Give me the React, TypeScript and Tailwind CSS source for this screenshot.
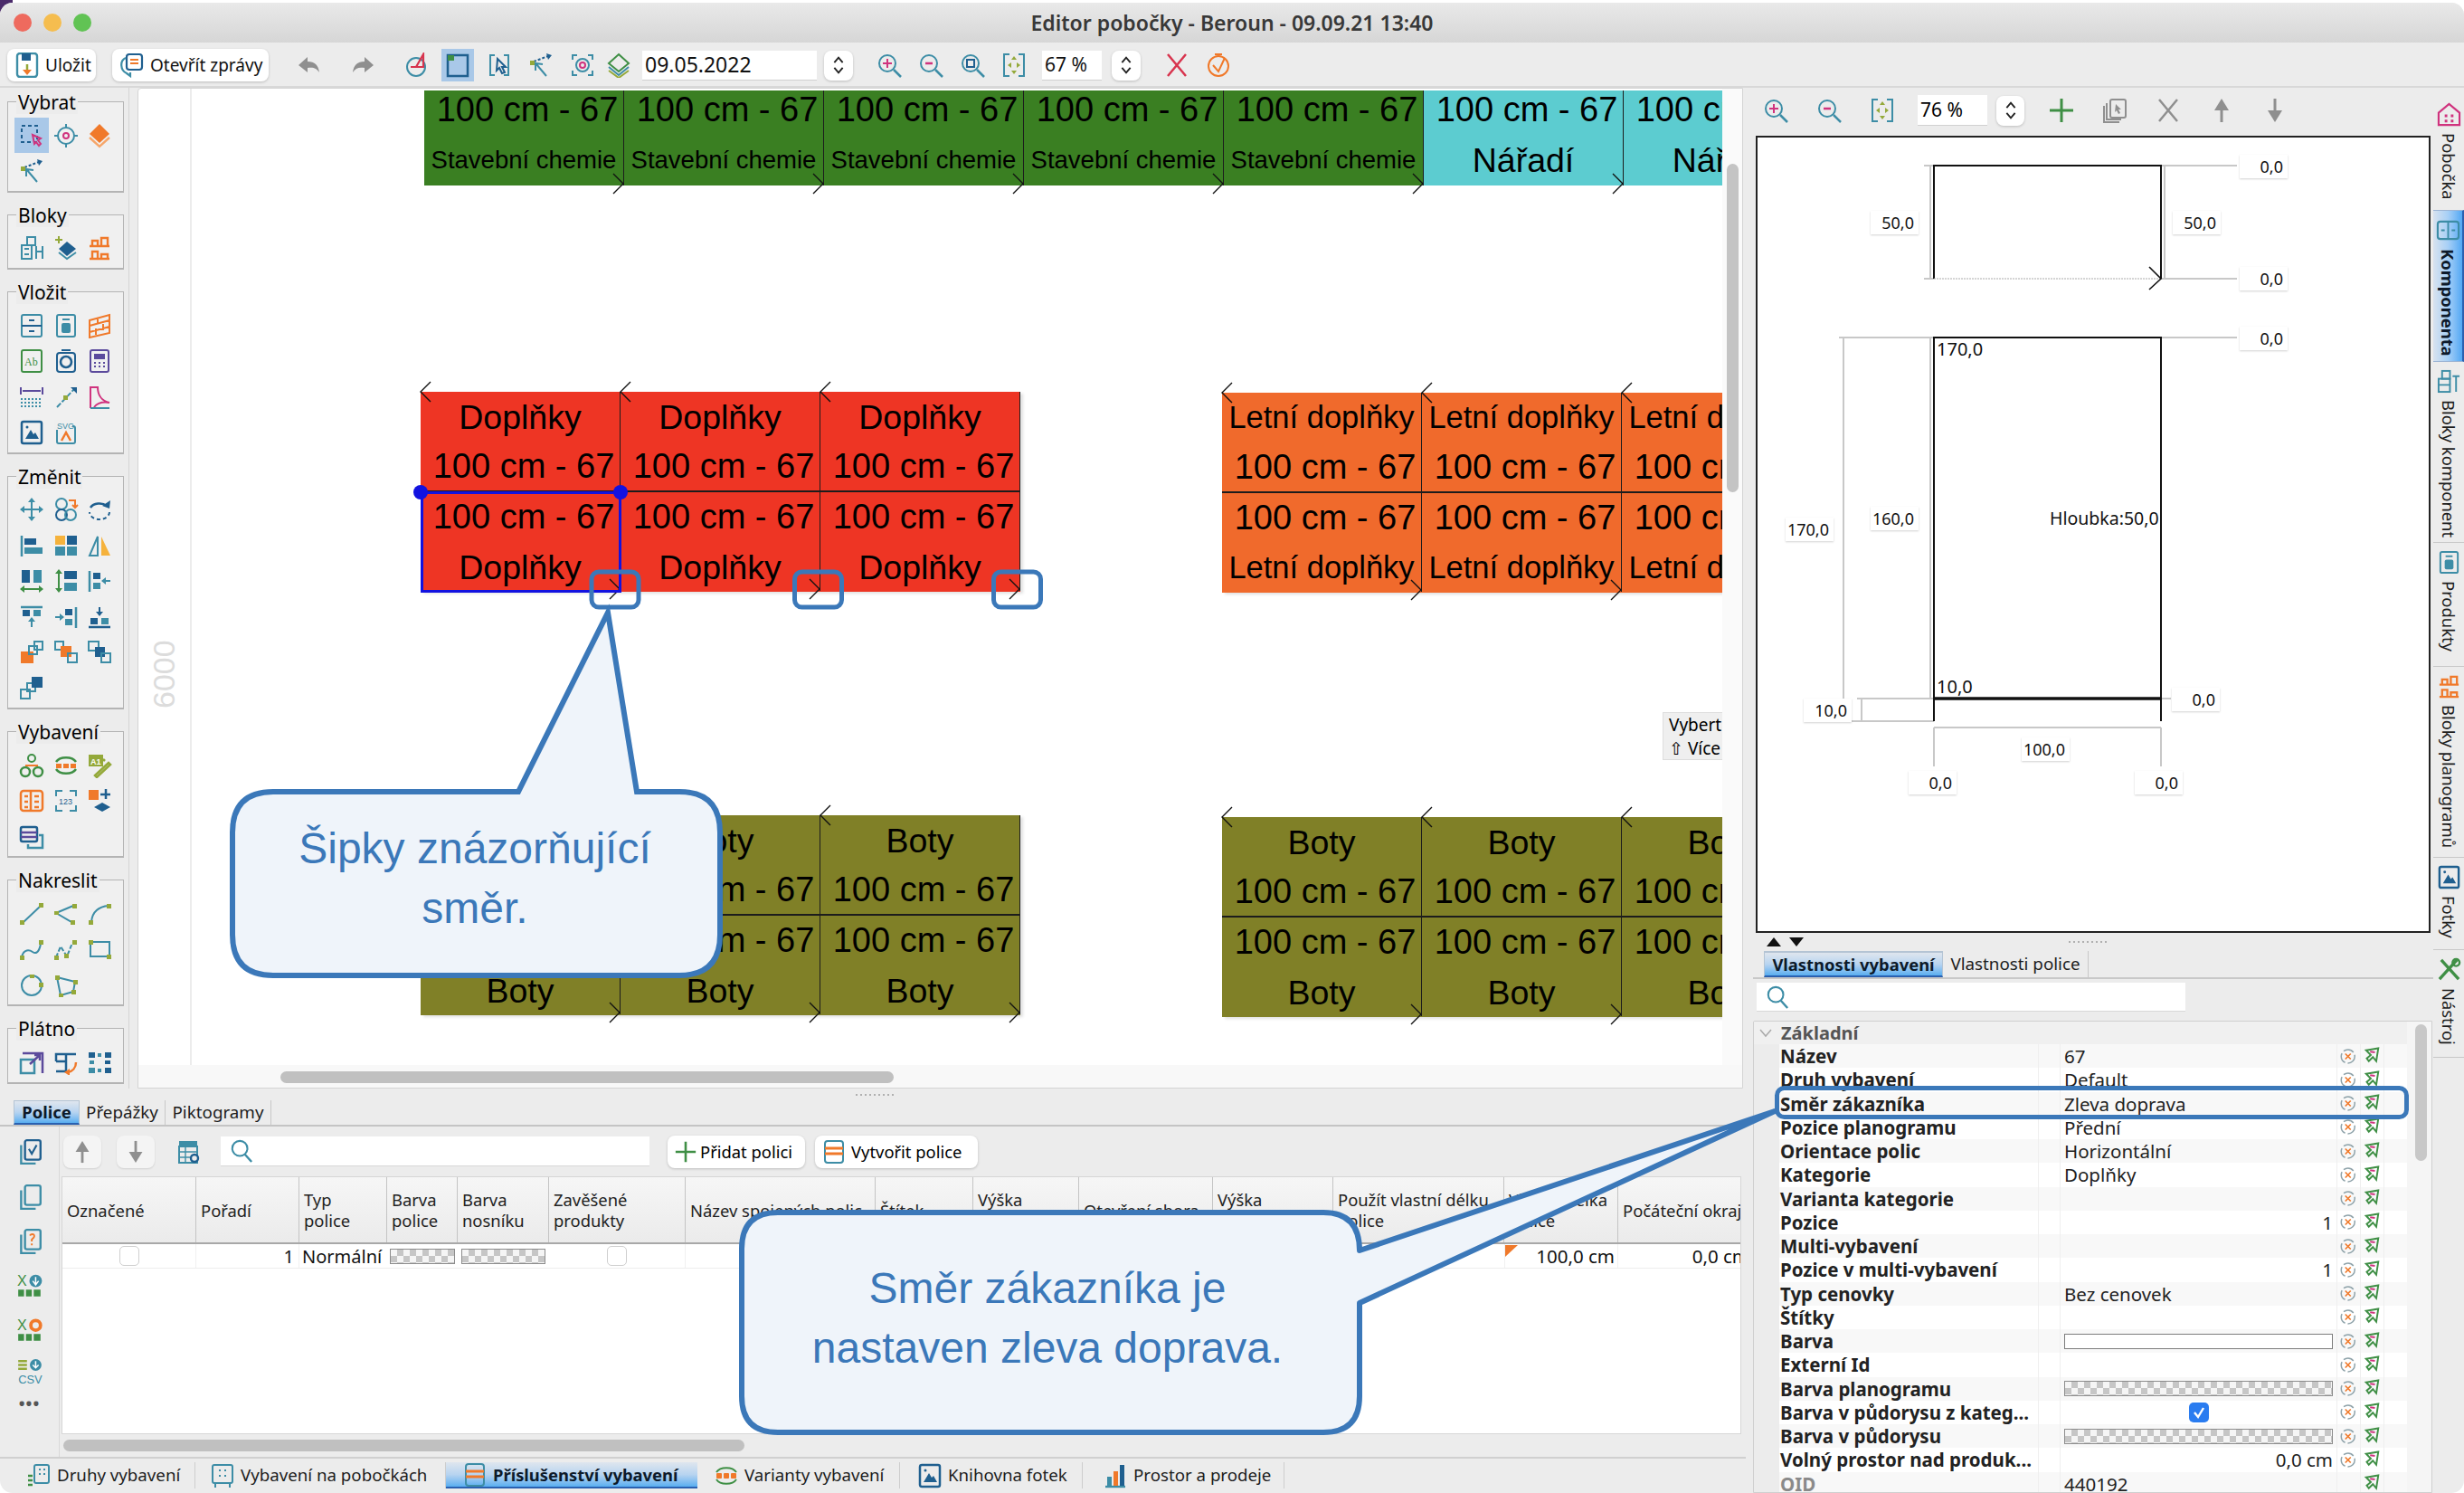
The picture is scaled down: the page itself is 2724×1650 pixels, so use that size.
import React from "react";

const T = "#3d8da6", N = "#1f5f8f", O = "#f0792a", G = "#3f8f45", L = "#94a93a", P = "#d0337e", V = "#5b4a9c", GR = "#8f8f8f", R = "#d8344e";

function Ic({ s = 28, children }: { s?: number; children: React.ReactNode }) {
  return (
    <svg width={s} height={s} viewBox="0 0 28 28" fill="none" strokeWidth="2" className="shrink-0">
      {children}
    </svg>
  );
}

const icons: Record<string, React.ReactNode> = {
  select: <><rect x="3" y="3" width="17" height="18" stroke={N} strokeDasharray="4 3" /><path d="M15 13l9 4-3 2 3 4-2 2-3-4-2 2z" stroke={P} /></>,
  target: <><circle cx="14" cy="14" r="9" stroke={T} /><path d="M14 1v5M14 22v5M1 14h5M22 14h5" stroke={T} /><circle cx="14" cy="14" r="3" stroke={P} /></>,
  layers: <><path d="M14 1l11 11-11 10L3 12z" fill={O} /><path d="M3 16l11 10 11-10" stroke="#f6a66a" strokeWidth="2.4" /></>,
  connect: <><path d="M6 10L22 4" stroke={N} strokeDasharray="3 2" /><path d="M20 1l6 2-4 5z" fill={N} /><rect x="2" y="9" width="5" height="5" fill={L} /><path d="M20 26L9 13M8 20l0-8 8 1" stroke={T} /></>,
  blocks: <><rect x="3" y="11" width="11" height="15" stroke={T} /><rect x="9" y="2" width="9" height="9" stroke={T} /><path d="M19 12v14M19 18h7M26 12v14M6 15h5M6 21h5" stroke={T} /></>,
  addlayer: <><path d="M15 7l10 8-10 8-9-8z" fill={N} /><path d="M6 19l9 7 10-7" stroke={T} /><path d="M6 1v8M2 5h8" stroke={L} /></>,
  oshelf: <><path d="M3 12h22M3 26h22M6 12V6h6v6M16 12V3h7v9M6 26v-8h6v8M16 26v-5h7v5" stroke={O} strokeWidth="2.4" /></>,
  drawer: <><rect x="3" y="2" width="22" height="24" rx="2" stroke={T} /><path d="M3 14h22M11 8h6M11 20h6" stroke={N} /></>,
  box: <><rect x="4" y="2" width="20" height="24" rx="2" stroke={T} /><rect x="9" y="11" width="10" height="11" rx="2" fill={T} /><path d="M10 7h8" stroke={T} /></>,
  bricks: <><path d="M3 8l22-6v6L3 14zM3 14l22-6v7L3 21zM3 21l22-6v7L3 27zM12 5v7M18 12v7M10 17v7" stroke={O} /></>,
  ab: <><rect x="3" y="2" width="22" height="24" rx="2" stroke={G} /><text x="6" y="19" fontSize="12" fill="#3f8f45" fontFamily="Liberation Serif, serif">Ab</text></>,
  camera: <><rect x="4" y="5" width="20" height="21" rx="3" stroke={N} /><circle cx="14" cy="15" r="6" stroke={N} strokeWidth="2.6" /><path d="M9 2h10" stroke={N} /></>,
  calc: <><rect x="4" y="2" width="20" height="24" rx="2" stroke={V} /><rect x="8" y="6" width="12" height="6" fill={V} /><path d="M8 16h2M13 16h2M18 16h2M8 20h2M13 20h2M18 20h2" stroke={V} /></>,
  dim: <><path d="M2 3v8M26 3v8M4 7h20" stroke={V} /><path d="M2 16h24M2 20h24M2 24h24" stroke={T} strokeDasharray="2 2" /></>,
  line: <><path d="M4 25L24 4" stroke={T} strokeDasharray="6 2" /><rect x="11" y="12" width="5" height="5" fill={L} /><path d="M19 3h7v7z" fill={N} /></>,
  pdf: <><path d="M4 26V3h8c0 8 4 15 13 17-6-1-13 0-17 5" stroke={P} /><path d="M4 26h21" stroke={T} /></>,
  image: <><rect x="3" y="2" width="22" height="24" rx="2" stroke={N} strokeWidth="2.5" /><path d="M7 21l6-10 3 5 2-2 4 7z" fill={N} /><circle cx="9" cy="8" r="1.5" fill={N} /></>,
  svg: <><rect x="4" y="7" width="20" height="19" rx="2" stroke={T} /><rect x="1" y="0" width="20" height="11" fill="#efefef" /><text x="4" y="9.5" fontSize="9" fill="#3d8da6" fontFamily="Liberation Sans, sans-serif">SVG</text><path d="M9 23l5-9 5 9" stroke={O} strokeWidth="2.5" /></>,
  move: <><path d="M14 2v24M2 14h24" stroke={T} /><path d="M14 1l-4 5h8zM14 27l-4-5h8zM1 14l5-4v8zM27 14l-5-4v8z" fill={T} /></>,
  merge: <><circle cx="9" cy="8" r="6" stroke={T} /><circle cx="9" cy="20" r="6" stroke={N} /><circle cx="19" cy="20" r="6" stroke={T} /><path d="M17 4h7v7M21 9l3 3 3-3" stroke={O} /></>,
  rotate: <><path d="M4 12a11 8 0 0 1 18-2" stroke={N} strokeWidth="2.5" /><path d="M26 4l-1 9-8-3z" fill={N} /><path d="M25 17a11 8 0 0 1-22 0" stroke={N} strokeDasharray="4 3" /></>,
  alignL: <><path d="M3 3v23" stroke={T} strokeWidth="2.5" /><rect x="6" y="6" width="13" height="7" fill={N} /><rect x="6" y="16" width="20" height="7" fill={T} /></>,
  tile: <><rect x="2" y="3" width="11" height="10" fill="#f5b23c" /><rect x="15" y="3" width="11" height="10" fill={N} /><rect x="2" y="15" width="11" height="10" fill={T} /><rect x="15" y="15" width="11" height="10" fill={T} /></>,
  mirror: <><path d="M12 4L3 25h9z" stroke={T} /><path d="M16 4l10 21H16z" fill="#f5b23c" /></>,
  distH: <><rect x="3" y="2" width="9" height="14" fill={N} /><rect x="16" y="2" width="9" height="14" fill={T} /><path d="M2 23h24" stroke={G} /><path d="M1 23l5-4v8zM27 23l-5-4v8z" fill={G} /></>,
  distV: <><path d="M6 3v22" stroke={G} /><path d="M6 1l-4 5h8zM6 27l-4-5h8z" fill={G} /><rect x="12" y="3" width="14" height="9" fill={N} /><rect x="12" y="16" width="14" height="9" fill={T} /></>,
  alignLA: <><path d="M3 3v23" stroke={T} strokeWidth="2.5" /><rect x="7" y="5" width="8" height="7" fill={N} /><rect x="7" y="16" width="8" height="7" fill={T} /><path d="M17 14h9" stroke={T} /><path d="M16 14l5-4v8z" fill={T} /></>,
  alignT: <><path d="M2 3h24" stroke={T} strokeWidth="2.5" /><rect x="4" y="6" width="8" height="7" fill={N} /><rect x="16" y="6" width="8" height="7" fill={T} /><path d="M14 15v10" stroke={T} /><path d="M14 14l-4 5h8z" fill={T} /></>,
  alignR: <><path d="M25 3v23" stroke={T} strokeWidth="2.5" /><rect x="13" y="5" width="8" height="7" fill={N} /><rect x="13" y="16" width="8" height="7" fill={T} /><path d="M2 14h9" stroke={T} /><path d="M12 14l-5-4v8z" fill={T} /></>,
  alignB: <><path d="M2 25h24" stroke={N} strokeWidth="2.5" /><rect x="4" y="15" width="8" height="7" fill={N} /><rect x="16" y="15" width="8" height="7" fill={T} /><path d="M14 3v9" stroke={N} /><path d="M14 13l-4-5h8z" fill={N} /></>,
  front: <><rect x="2" y="13" width="14" height="13" fill={O} /><rect x="11" y="7" width="9" height="9" stroke={T} /><rect x="17" y="2" width="9" height="9" stroke={T} /></>,
  forward: <><rect x="2" y="2" width="9" height="9" stroke={T} /><rect x="8" y="7" width="12" height="12" fill={O} /><rect x="16" y="15" width="10" height="10" stroke={T} /></>,
  backward: <><rect x="2" y="2" width="11" height="10" stroke={T} /><rect x="9" y="8" width="11" height="11" fill={N} /><rect x="16" y="15" width="10" height="10" stroke={T} /></>,
  back: <><rect x="2" y="16" width="10" height="10" stroke={T} /><rect x="9" y="9" width="9" height="9" stroke={T} /><rect x="14" y="2" width="12" height="12" fill={N} /></>,
  tree: <><circle cx="14" cy="6" r="4" stroke={G} /><circle cx="7" cy="21" r="5" stroke={G} strokeWidth="2.5" /><circle cx="21" cy="21" r="5" stroke={G} strokeWidth="2.5" /><path d="M7 14h14" stroke={O} /></>,
  arc: <><path d="M3 10a12 8 0 0 1 22 0M3 18a12 8 0 0 0 22 0" stroke={G} strokeWidth="2.5" /><rect x="3" y="12" width="6" height="5" fill={O} /><rect x="11" y="12" width="6" height="5" fill={O} /><rect x="19" y="12" width="6" height="5" fill={O} /></>,
  a1: <><rect x="2" y="2" width="16" height="13" fill={L} /><text x="4" y="12.5" fontSize="9" fontWeight="700" fill="#ffffff" fontFamily="Liberation Sans, sans-serif">A1</text><path d="M9 25l15-14 2 2-15 14zM18 7l2 2" stroke={L} strokeWidth="2.5" /></>,
  oshelf2: <><rect x="2" y="3" width="24" height="22" rx="3" stroke={O} strokeWidth="2.5" /><path d="M13 3v22M6 9h4M6 15h4M6 21h4M17 9h5M17 15h5M17 21h5" stroke={O} strokeWidth="2.5" /></>,
  n123: <><path d="M3 9V3h7M18 3h7v6M3 19v6h7M18 25h7v-6" stroke={T} /><text x="6" y="18" fontSize="9" fill="#1f5f8f" fontFamily="Liberation Sans, sans-serif">123</text></>,
  oplus: <><rect x="2" y="2" width="11" height="11" fill={O} /><path d="M21 1v11M15 7h11" stroke={N} strokeWidth="2.5" /><path d="M8 21l9-5 9 5-9 5z" fill={N} /></>,
  list: <><rect x="2" y="3" width="18" height="16" rx="2" stroke={N} strokeWidth="2.5" /><path d="M2 9h18M2 14h18" stroke={V} strokeWidth="2.5" /><path d="M22 12h4v14H10v-4" stroke={T} strokeWidth="2.5" /></>,
  dline: <><path d="M5 23L23 6" stroke={T} /><rect x="1" y="21" width="5" height="5" fill={L} /><rect x="22" y="2" width="5" height="5" fill={L} /></>,
  dpoly: <><path d="M3 13L22 5M3 13l17 10" stroke={T} /><rect x="1" y="11" width="5" height="4" fill={L} /><rect x="21" y="3" width="5" height="5" fill={L} /><rect x="19" y="21" width="5" height="5" fill={L} /></>,
  darc: <><path d="M5 23C6 12 12 6 24 5" stroke={T} /><rect x="2" y="21" width="5" height="5" fill={L} /><rect x="22" y="3" width="5" height="5" fill={L} /></>,
  dcurve: <><path d="M3 23c2-10 9-8 12-6s7 2 9-9" stroke={T} /><rect x="1" y="21" width="5" height="5" fill={L} /><rect x="22" y="4" width="5" height="5" fill={L} /></>,
  dcurve2: <><path d="M3 23l5-12 7 11 6-15" stroke={T} strokeDasharray="5 2" /><rect x="1" y="21" width="5" height="5" fill={L} /><rect x="12" y="19" width="5" height="5" fill={L} /><rect x="21" y="4" width="5" height="5" fill={L} /></>,
  drect: <><rect x="4" y="6" width="21" height="16" stroke={T} /><rect x="2" y="4" width="5" height="5" fill={L} /><rect x="22" y="20" width="5" height="5" fill={L} /></>,
  dcirc: <><circle cx="14" cy="14" r="11" stroke={T} /><rect x="22" y="11" width="5" height="5" fill={L} /><rect x="12" y="2" width="5" height="4" fill={L} /></>,
  dpolyg: <><path d="M4 5l20 5-2 11-14 4z" stroke={T} /><rect x="2" y="3" width="5" height="5" fill={L} /><rect x="22" y="8" width="5" height="5" fill={L} /><rect x="20" y="19" width="5" height="5" fill={L} /><rect x="6" y="23" width="5" height="4" fill={L} /></>,
  resize: <><rect x="2" y="11" width="15" height="15" stroke={T} strokeWidth="2.5" /><path d="M4 4h22v22M12 16L23 6M17 6h6v6" stroke={V} strokeWidth="2.5" /></>,
  rot90: <><path d="M3 13V5h22M14 5v8M3 13h11v11H3" stroke={N} strokeWidth="2.5" /><path d="M25 14c0 6-4 10-9 11" stroke={O} strokeWidth="2.5" /><path d="M12 25l6-4v8z" fill={O} /></>,
  dots: <><rect x="2" y="3" width="7" height="6" fill={N} /><rect x="12" y="4" width="4" height="4" fill={T} /><rect x="20" y="3" width="7" height="6" fill={N} /><rect x="3" y="12" width="5" height="4" fill={T} /><rect x="20" y="12" width="6" height="4" fill={N} /><rect x="2" y="20" width="7" height="6" fill={T} /><rect x="12" y="21" width="4" height="4" fill={T} /><rect x="20" y="20" width="7" height="6" fill={N} /></>,
  save: <><rect x="3" y="1" width="22" height="26" rx="3" stroke={T} strokeWidth="2.4" /><rect x="8" y="1" width="10" height="8" fill={N} /><path d="M14 13v8" stroke={L} strokeWidth="2.5" /><path d="M14 25l-5-6h10z" fill={O} /></>,
  msg: <><rect x="8" y="2" width="17" height="17" rx="3" stroke={N} strokeWidth="2.2" /><path d="M12 8h9M12 12h9" stroke={O} strokeWidth="2.2" /><path d="M7 6c-7 3-6 14 1 17l4 3v-4" stroke={T} strokeWidth="2.2" /></>,
  undo: <path d="M12 5L2 14l10 8v-5c6-1 10 0 13 5-1-8-5-12-13-12z" fill={GR} />,
  redo: <path d="M16 5l10 9-10 8v-5c-6-1-10 0-13 5 1-8 5-12 13-12z" fill={GR} />,
  clock: <><circle cx="14" cy="16" r="10" stroke={T} /><path d="M14 16l8-14 0 14H8" stroke={R} strokeWidth="2.2" /></>,
  sel: <><rect x="3" y="3" width="22" height="23" stroke={N} strokeWidth="2.5" /><rect x="3" y="3" width="7" height="6" fill={G} /></>,
  selarrow: <><path d="M9 3H4v22h5M19 3h5v22h-5" stroke={T} /><path d="M12 7l9 9-4 0 3 6-3 1-3-6-3 3z" stroke={N} /></>,
  cam: <><path d="M8 3H3v5M20 3h5v5M8 25H3v-5M20 25h5v-5" stroke={T} /><circle cx="14" cy="14" r="7" stroke={T} /><circle cx="14" cy="14" r="3" stroke={P} /></>,
  stack: <><path d="M14 2l11 10-11 9L3 12z" stroke={G} /><path d="M3 16l11 9 11-9" stroke={T} /><path d="M3 20l11 8 11-8" stroke={L} /></>,
  zin: <><circle cx="12" cy="12" r="9" stroke={T} /><path d="M19 19l8 8" stroke={T} strokeWidth="2.5" /><path d="M12 7v10M7 12h10" stroke={P} /></>,
  zout: <><circle cx="12" cy="12" r="9" stroke={T} /><path d="M19 19l8 8" stroke={T} strokeWidth="2.5" /><path d="M8 12h8" stroke={P} strokeWidth="2.5" /></>,
  zfit: <><circle cx="12" cy="12" r="9" stroke={T} /><path d="M19 19l8 8" stroke={T} strokeWidth="2.5" /><rect x="8" y="8" width="8" height="8" stroke={N} /></>,
  zall: <><path d="M9 2H3v24h6M19 2h6v24h-6" stroke={T} /><path d="M14 4l3 4h-6zM14 24l3-4h-6zM7 14l4-3v6zM21 14l-4-3v6z" fill={L} /></>,
  x: <path d="M4 2l20 24M24 2L4 26" stroke={R} strokeWidth="2.5" />,
  check: <><circle cx="14" cy="15" r="11" stroke={O} /><path d="M8 14l6 7 7-15M10 2h8" stroke={O} /></>,
  xg: <path d="M4 2l20 24M24 2L4 26" stroke={GR} strokeWidth="2.5" />,
  plus: <path d="M14 1v26M1 14h26" stroke="#3f8f45" strokeWidth="3" />,
  copy: <><rect x="9" y="2" width="17" height="20" rx="2" stroke={GR} /><path d="M5 6v18h16M2 9v18h17" stroke={GR} /><path d="M15 7l6 6h-3l2 4-2 1-2-4-2 2z" fill={GR} /></>,
  up: <><path d="M14 1l-8 13h16z" fill={GR} /><path d="M14 12v15" stroke={GR} strokeWidth="3" /></>,
  down: <><path d="M14 27l-8-13h16z" fill={GR} /><path d="M14 16V1" stroke={GR} strokeWidth="3" /></>,
  search: <><circle cx="12" cy="11" r="9" stroke={T} strokeWidth="2.2" /><path d="M18 18l8 9" stroke={T} strokeWidth="2.6" /></>,
  tcheck: <><rect x="9" y="2" width="16" height="20" rx="2" stroke={N} strokeWidth="2.2" /><path d="M5 7v19h15" stroke={T} strokeWidth="2.2" /><path d="M13 11l3 5 5-9" stroke={N} strokeWidth="2" /></>,
  tcopy: <><rect x="9" y="2" width="16" height="20" rx="2" stroke={T} strokeWidth="2.2" /><path d="M5 7v19h15" stroke={T} strokeWidth="2.2" /></>,
  thelp: <><rect x="9" y="2" width="16" height="20" rx="2" stroke={T} strokeWidth="2.2" /><path d="M5 7v19h15" stroke={T} strokeWidth="2.2" /><path d="M14 8c2-3 6-1 4 2l-2 2v2M16 16v2" stroke={O} strokeWidth="1.8" /></>,
  xlsd: <><text x="1" y="14" fontSize="15" fill="#3f8f45" fontFamily="Liberation Sans, sans-serif">X</text><circle cx="20" cy="9" r="6.5" fill={T} /><path d="M20 5v7M17 9l3 4 3-4" stroke="#fff" strokeWidth="1.4" /><path d="M2 18h6v7H2zM10 18h6v7h-6zM18 18h7v7h-7z" fill={G} /></>,
  xlso: <><text x="1" y="14" fontSize="15" fill="#3f8f45" fontFamily="Liberation Sans, sans-serif">X</text><circle cx="20" cy="9" r="5" stroke={O} strokeWidth="3.5" /><path d="M2 18h6v7H2zM10 18h6v7h-6zM18 18h7v7h-7z" fill={G} /></>,
  csv: <><path d="M2 3h9M2 7h9M2 11h9" stroke={L} strokeWidth="2.2" /><circle cx="20" cy="7" r="6" fill={T} /><path d="M20 3v6M17 7l3 3 3-3" stroke="#fff" strokeWidth="1.4" /><text x="2" y="26" fontSize="12" fill="#3d8da6" fontFamily="Liberation Sans, sans-serif">CSV</text></>,
  tset: <><rect x="3" y="2" width="20" height="6" fill={T} /><rect x="3" y="8" width="20" height="18" stroke={T} /><path d="M3 14h20M3 20h12M10 8v18" stroke={T} strokeWidth="1.4" /><circle cx="20" cy="21" r="4" stroke={N} strokeWidth="2.4" fill="#ececec" /></>,
  shelfo: <><rect x="4" y="2" width="20" height="24" rx="3" stroke={T} /><path d="M4 10h20M4 16h20" stroke={O} strokeWidth="3" /></>,
  kind: <><rect x="9" y="2" width="16" height="20" rx="2" stroke={T} /><path d="M14 7h2M19 7h2M14 12h2M19 12h2" stroke={T} /><path d="M2 14h5M2 19h5M2 24h5" stroke={G} strokeWidth="2.4" /></>,
  onb: <><rect x="3" y="2" width="22" height="20" rx="2" stroke={T} /><path d="M6 22v5M22 22v5M10 8h2M16 8h2M10 14h2M16 14h2" stroke={T} /></>,
  vari: <><path d="M3 10a12 8 0 0 1 22 0M3 18a12 8 0 0 0 22 0" stroke={G} /><rect x="3" y="11" width="6" height="6" rx="1" fill={O} /><rect x="11" y="11" width="6" height="6" rx="1" fill={O} /><rect x="19" y="11" width="6" height="6" rx="1" fill={O} /></>,
  chart: <><path d="M3 26h22" stroke={T} strokeWidth="2.4" /><rect x="5" y="15" width="5" height="10" fill={T} /><rect x="12" y="9" width="5" height="16" fill={O} /><rect x="19" y="2" width="5" height="23" fill={N} /></>,
  house: <><path d="M2 12L14 2l12 10v14H2z" stroke={P} strokeWidth="2.2" /><path d="M9 14h3v3H9zM16 14h3v3h-3zM9 20h3v3H9zM16 20h3v3h-3z" fill={P} /></>,
  comp: <><rect x="2" y="4" width="24" height="20" rx="3" stroke={T} strokeWidth="2.2" /><path d="M14 4v20M6 14h4M18 14h4" stroke={T} /></>,
  ble: <><rect x="2" y="11" width="13" height="15" stroke={T} /><rect x="6" y="2" width="9" height="9" stroke={T} /><path d="M18 8h8M22 8v18M2 18h13" stroke={T} /></>,
  wrench: <><path d="M5 3l20 22M23 3L3 25" stroke={G} strokeWidth="3.5" /><circle cx="22" cy="6" r="4" stroke={G} strokeWidth="2.5" /></>,
  reset: <><circle cx="13" cy="14" r="10" stroke="#8fa3aa" strokeWidth="2" strokeDasharray="16 4" /><path d="M9 10l8 8M17 10l-8 8" stroke={O} strokeWidth="2.2" /></>,
  pick: <><path d="M5 5l18-3-3 19-5-6-6 6-3-4 6-5z" stroke={G} strokeWidth="2.6" /><path d="M11 7l7 1" stroke={P} strokeWidth="2.4" /></>,
  spin: <path d="M9 11l5-6 5 6M9 17l5 6 5-6" stroke="#222" strokeWidth="2" />,
};

function Icon({ n, s }: { n: string; s?: number }) {
  return <Ic s={s}>{icons[n]}</Ic>;
}

function ToolSection({ title, items }: { title: string; items: string[] }) {
  return (
    <div className="relative w-[129px] border border-b-2 border-[#b4b4b4] bg-[#f0f0f0] px-[7px] pt-[17px] pb-[2px]">
      <span className="absolute -top-[13px] left-[9px] bg-[#ececec] px-[2px] text-[21px] leading-[26px] text-black">{title}</span>
      <div className="grid grid-cols-3">
        {items.map((n, i) => (
          <div key={i} className={`flex h-[39.4px] w-[38px] items-center justify-center ${n === "select" ? "bg-[#a9c8e8]" : ""}`}>
            <Icon n={n} />
          </div>
        ))}
      </div>
    </div>
  );
}

function Toolbox() {
  return (
    <div className="flex w-[143px] shrink-0 flex-col gap-[24px] border-r border-[#d4d4d4] pt-[15px] pl-[8px]">
      <ToolSection title="Vybrat" items={["select", "target", "layers", "connect"]} />
      <ToolSection title="Bloky" items={["blocks", "addlayer", "oshelf"]} />
      <ToolSection title="Vložit" items={["drawer", "box", "bricks", "ab", "camera", "calc", "dim", "line", "pdf", "image", "svg"]} />
      <ToolSection title="Změnit" items={["move", "merge", "rotate", "alignL", "tile", "mirror", "distH", "distV", "alignLA", "alignT", "alignR", "alignB", "front", "forward", "backward", "back"]} />
      <ToolSection title="Vybavení" items={["tree", "arc", "a1", "oshelf2", "n123", "oplus", "list"]} />
      <ToolSection title="Nakreslit" items={["dline", "dpoly", "darc", "dcurve", "dcurve2", "drect", "dcirc", "dpolyg"]} />
      <ToolSection title="Plátno" items={["resize", "rot90", "dots"]} />
    </div>
  );
}

function ChevL() {
  return (
    <svg width="14" height="26" viewBox="0 0 14 26" className="absolute -left-[1px] -top-[12px] z-10" fill="none">
      <path d="M12 1L1 12l11 11" stroke="#111" strokeWidth="1.4" />
    </svg>
  );
}
function ChevR() {
  return (
    <svg width="14" height="26" viewBox="0 0 14 26" className="absolute -bottom-[12px] -right-[1px] z-10" fill="none">
      <path d="M2 1l11 11L2 23" stroke="#111" strokeWidth="1.4" />
    </svg>
  );
}

const cellFont = "font-['Liberation_Sans',Arial,sans-serif] text-black";
const dimText = "100 cm - 67";

function textSize(l: string) {
  if (l === dimText) return "text-[38px] pl-[8px]";
  return l.length > 8 ? "text-[34.5px]" : "text-[37.5px]";
}

function Cell({ lines, rowCls, lineCls, top, bottom }: { lines: [string, string]; rowCls: string; lineCls: string; top?: boolean; bottom?: boolean }) {
  return (
    <div className={`relative w-[221px] shrink-0 border-r border-[#1c1c1c] ${rowCls}`}>
      {top && <ChevL />}
      {bottom && <ChevR />}
      <div className={`flex flex-col items-center whitespace-nowrap ${cellFont}`}>
        {lines.map((l, i) => (
          <div key={i} className={`flex items-center ${lineCls} ${textSize(l)}`}>{l}</div>
        ))}
      </div>
    </div>
  );
}

function Block({ pos, name, color, cols }: { pos: string; name: string; color: string; cols: number }) {
  const idx = Array.from({ length: cols }, (_, i) => i);
  return (
    <div className={`absolute ${pos} ${color} shadow-[3px_2px_3px_rgba(0,0,0,0.12)]`}>
      <div className="flex h-[111px] border-b-2 border-[#1c1c1c]">
        {idx.map((i) => <Cell key={i} lines={[name, dimText]} rowCls="h-[109px] pt-[1px]" lineCls="h-[54px]" top />)}
      </div>
      <div className="flex h-[110px]">
        {idx.map((i) => <Cell key={i} lines={[dimText, name]} rowCls="h-[110px] -mt-[1px]" lineCls="h-[56px]" bottom />)}
      </div>
    </div>
  );
}

function GreenCell({ second, color }: { second: string; color: string }) {
  return (
    <div className={`relative h-[105px] w-[221px] shrink-0 border-r border-[#1c1c1c] ${color}`}>
      <ChevR />
      <div className={`-mt-[7px] flex flex-col items-center whitespace-nowrap ${cellFont}`}>
        <div className="flex h-[56px] items-center pl-[8px] text-[38px]">{dimText}</div>
        <div className={second.length > 8 ? "flex h-[56px] items-center text-[27.5px]" : "flex h-[56px] items-center text-[37.5px]"}>{second}</div>
      </div>
    </div>
  );
}

function Canvas() {
  return (
    <div className="relative flex min-w-0 flex-1 flex-col rounded-tl-[4px] border border-[#d4d4d4] bg-white">
      <div className="flex min-h-0 flex-1">
        <div className="relative min-w-0 flex-1 overflow-hidden">
          <div className="absolute bottom-0 left-[57px] top-0 w-[2px] bg-[#ececec]" />
          <span className="absolute -left-[1px] top-[641px] w-[58px] -rotate-90 text-center font-['Liberation_Sans',sans-serif] text-[34px] leading-[30px] text-[#dcdcdc]">6000</span>

          <div className="absolute left-[316px] top-[2px] flex">
            {[0, 1, 2, 3, 4].map((i) => <GreenCell key={i} second="Stavební chemie" color="bg-[#3a7f22]" />)}
            {[5, 6].map((i) => <GreenCell key={i} second="Nářadí" color="bg-[#5cccd0]" />)}
          </div>

          <Block pos="left-[312px] top-[335px]" name="Doplňky" color="bg-[#ee3524]" cols={3} />
          <Block pos="left-[1198px] top-[336px]" name="Letní doplňky" color="bg-[#f06a2c]" cols={3} />
          <Block pos="left-[312px] top-[803px]" name="Boty" color="bg-[#808027]" cols={3} />
          <Block pos="left-[1198px] top-[805px]" name="Boty" color="bg-[#808027]" cols={3} />

          <div className="absolute left-[312px] top-[445px] z-10 h-[112px] w-[222px] border-[3px] border-[#1212e0]" />
          <div className="absolute left-[304px] top-[438px] z-10 h-[16px] w-[16px] rounded-full bg-[#1212e0]" />
          <div className="absolute left-[525px] top-[438px] z-10 h-[16px] w-[16px] rounded-full bg-[#1212e0]" />

          <div className="absolute left-[1685px] top-[689px] h-[53px] w-[80px] border border-[#dddddd] bg-[#efefef] pl-[6px] text-[19px] leading-[26px] text-black whitespace-nowrap">
            <div>Vybert</div>
            <div>⇧ Více</div>
          </div>
        </div>
        <div className="relative w-[22px] shrink-0 bg-[#fafafa]">
          <div className="absolute left-[5px] top-[83px] h-[363px] w-[13px] rounded-full bg-[#c4c4c4]" />
        </div>
      </div>
      <div className="relative h-[25px] shrink-0 bg-[#f8f8f8]">
        <div className="absolute left-[157px] top-[7px] h-[13px] w-[678px] rounded-full bg-[#c0c0c0]" />
      </div>
    </div>
  );
}

function Tab({ label, active, cls }: { label: string; active?: boolean; cls: string }) {
  return (
    <div className={`flex h-full items-center justify-center whitespace-nowrap ${cls} ${active ? "border-t border-x border-[#b4c4d4] bg-gradient-to-b from-[#dfe6ee] via-[#b8d4f0] to-[#57aef0] text-[18.4px] font-bold text-[#0d1a2a] border-b-2 border-b-[#2a60b0]" : "text-[18.8px] text-[#1d1d1d]"}`}>
      {label}
    </div>
  );
}

function ShelfTable() {
  const cols = [
    { w: "w-[148px]", t: "Označené" },
    { w: "w-[114px]", t: "Pořadí" },
    { w: "w-[97px]", t: "Typ\npolice" },
    { w: "w-[78px]", t: "Barva\npolice" },
    { w: "w-[101px]", t: "Barva\nnosníku" },
    { w: "w-[151px]", t: "Zavěšené\nprodukty" },
    { w: "w-[210px]", t: "Název spojených polic" },
    { w: "w-[108px]", t: "Štítek" },
    { w: "w-[117px]", t: "Výška\nnosníku" },
    { w: "w-[148px]", t: "Otevření shora" },
    { w: "w-[133px]", t: "Výška\npolice" },
    { w: "w-[189px]", t: "Použít vlastní délku\npolice" },
    { w: "w-[126px]", t: "Vlastní délka\npolice" },
    { w: "w-[150px]", t: "Počáteční okraj" },
  ];
  const checker = "[background:repeating-conic-gradient(#c6c6c6_0_25%,#f5f5f5_0_50%)_0_0/14px_14px]";
  return (
    <div className="ml-[2px] flex h-[285px] w-[1857px] flex-col overflow-hidden border border-[#d6d6d6] bg-white">
      <div className="flex h-[74px] shrink-0 border-b-2 border-[#a8a8a8] bg-gradient-to-b from-[#f6f6f6] to-[#ebebeb]">
        {cols.map((c, i) => (
          <div key={i} className={`${c.w} flex shrink-0 items-center whitespace-pre border-r border-[#c4c4c4] pl-[5px] text-[18.4px] leading-[23px] text-[#222]`}>
            {c.t}
          </div>
        ))}
      </div>
      <div className="flex h-[27px] shrink-0 border-b border-[#ededed] text-[20px] leading-[27px] text-[#111]">
        <div className="flex w-[148px] shrink-0 items-center justify-center border-r border-[#f0f0f0]"><div className="h-[22px] w-[22px] rounded-[5px] border border-[#cfcfcf] bg-white" /></div>
        <div className="w-[114px] shrink-0 border-r border-[#f0f0f0] pr-[5px] text-right">1</div>
        <div className="w-[97px] shrink-0 pl-[3px]">Normální</div>
        <div className="flex w-[78px] shrink-0 items-center px-[3px]"><div className={`h-[17px] w-full border border-[#8c8c8c] ${checker}`} /></div>
        <div className="flex w-[101px] shrink-0 items-center px-[4px]"><div className={`h-[17px] w-full border border-[#8c8c8c] ${checker}`} /></div>
        <div className="flex w-[151px] shrink-0 items-center justify-center border-r border-[#f0f0f0]"><div className="h-[22px] w-[22px] rounded-[5px] border border-[#cfcfcf] bg-white" /></div>
        <div className="w-[905px] shrink-0" />
        <div className="relative w-[126px] shrink-0 border-x border-[#f0f0f0] pr-[3px] text-right text-[20.5px]">
          <svg width="14" height="13" viewBox="0 0 14 13" className="absolute left-0 top-[1px]"><path d="M0 0h14L0 13z" fill="#f0792a" /></svg>
          100,0 cm
        </div>
        <div className="w-[150px] shrink-0 pr-[5px] text-right text-[20.5px]">0,0 cm</div>
      </div>
    </div>
  );
}

function BottomPanel() {
  const side: [string, string][] = [["tcheck", "h-[50px]"], ["tcopy", "h-[49px]"], ["thelp", "h-[50px]"], ["xlsd", "h-[48px]"], ["xlso", "h-[49px]"], ["csv", "h-[44px]"]];
  return (
    <div className="flex h-[396px] shrink-0 flex-col">
      <div className="flex h-[29px] shrink-0 border-b-2 border-[#c4c4c4] pl-[15px] text-[#1d1d1d]">
        <Tab label="Police" active cls="w-[73px]" />
        <Tab label="Přepážky" cls="w-[95px] border-r border-[#c8c8c8]" />
        <Tab label="Piktogramy" cls="w-[117px] border-r border-[#c8c8c8]" />
      </div>
      <div className="flex min-h-0 flex-1 border-b-2 border-[#d0d0d0]">
        <div className="flex w-[66px] shrink-0 flex-col items-center border-r border-[#d8d8d8] pt-[3px]">
          {side.map(([n, h]) => (
            <div key={n} className={`flex ${h} items-center justify-center`}><Icon n={n} s={30} /></div>
          ))}
          <div className="text-[18px] font-bold leading-[26px] tracking-[1px] text-[#555]">•••</div>
        </div>
        <div className="min-w-0 flex-1">
          <div className="flex h-[55px] items-center pl-[4px]">
            <div className="flex h-[36px] w-[42px] items-center justify-center rounded-[8px] bg-[#f4f4f4] shadow-[0_1px_2px_rgba(0,0,0,0.12)]"><Icon n="up" s={26} /></div>
            <div className="ml-[17px] flex h-[36px] w-[42px] items-center justify-center rounded-[8px] bg-[#f4f4f4] shadow-[0_1px_2px_rgba(0,0,0,0.12)]"><Icon n="down" s={26} /></div>
            <div className="ml-[24px] flex w-[28px] justify-center"><Icon n="tset" /></div>
            <div className="ml-[21px] flex h-[33px] w-[474px] items-center border-b border-[#d8d8d8] bg-white pl-[10px]"><Icon n="search" s={26} /></div>
            <div className="ml-[20px] flex h-[36px] w-[152px] items-center gap-[4px] rounded-[8px] bg-white pl-[8px] text-[18.4px] shadow-[0_1px_3px_rgba(0,0,0,0.2)]"><Icon n="plus" s={24} />Přidat polici</div>
            <div className="ml-[11px] flex h-[36px] w-[180px] items-center gap-[5px] rounded-[8px] bg-white pl-[7px] text-[18.4px] shadow-[0_1px_3px_rgba(0,0,0,0.2)]"><Icon n="shelfo" />Vytvořit police</div>
          </div>
          <ShelfTable />
          <div className="relative h-[22px]">
            <div className="absolute left-[4px] top-[6px] h-[13px] w-[753px] rounded-full bg-[#c0c0c0]" />
          </div>
        </div>
      </div>
    </div>
  );
}

function BottomTabs() {
  const items = [
    { n: "kind", t: "Druhy vybavení", w: "w-[216px] pl-[29px]" },
    { n: "onb", t: "Vybavení na pobočkách", w: "w-[277px] pl-[16px]" },
    { n: "shelfo", t: "Příslušenství vybavení", w: "w-[278px] pl-[18px]", a: true },
    { n: "vari", t: "Varianty vybavení", w: "w-[224px] pl-[18px]" },
    { n: "image", t: "Knihovna fotek", w: "w-[202px] pl-[19px]" },
    { n: "chart", t: "Prostor a prodeje", w: "w-[223px] pl-[22px]" },
  ];
  return (
    <div className="flex h-[38px] shrink-0 items-start pt-[4px]">
      {items.map((it) => (
        <div key={it.t} className={`flex h-[29px] shrink-0 items-center gap-[6px] whitespace-nowrap ${it.w} ${it.a ? "border-b-2 border-[#2a60b0] bg-gradient-to-b from-[#dfe6ee] via-[#b8d4f0] to-[#57aef0] text-[18.4px] font-bold text-[#0d1a2a]" : "border-r border-[#cdcdcd] text-[18.7px] text-[#1d1d1d]"}`}>
          <Icon n={it.n} />
          {it.t}
        </div>
      ))}
    </div>
  );
}

function Lab({ cls, t }: { cls: string; t: string }) {
  return (
    <div className={`absolute h-[26px] w-[53px] bg-white pr-[5px] text-right text-[18px] leading-[26px] text-[#111] shadow-[0_1px_2px_rgba(0,0,0,0.18)] ${cls}`}>{t}</div>
  );
}

function Diagram() {
  const gray = "#c8c8c8";
  return (
    <div className="h-[881px] w-[746px] shrink-0 border-2 border-[#222] bg-white p-px">
      <div className="relative h-full w-full">
        <svg className="absolute inset-0" width="740" height="875" viewBox="1944 153 740 875" fill="none">
          <g stroke={gray} strokeWidth="2">
            <path d="M2389 183H2473M2389 308H2473M2127 183H2138M2127 308H2138M2134 183V308M2393 183V308" />
            <path d="M2033 373H2138M2389 373H2473M2038 373V772M2134 373V772" />
            <path d="M2053 772H2138M2389 772H2400M2058 772V797M2032 797H2138" />
            <path d="M2138 804H2389M2138 804V847M2389 804V847" />
          </g>
          <path d="M2138 308V183H2389V308M2138 797V373H2389V797" stroke="#111" strokeWidth="2" />
          <path d="M2138 772H2389" stroke="#111" strokeWidth="3.5" />
          <path d="M2138 308H2389" stroke="#aaa" strokeWidth="1" strokeDasharray="2 1" />
          <path d="M2376 295L2389 308L2376 320" stroke="#111" strokeWidth="1.6" />
        </svg>
        <Lab cls="left-[532px] top-[18px]" t="0,0" />
        <Lab cls="left-[124px] top-[80px]" t="50,0" />
        <Lab cls="left-[458px] top-[80px]" t="50,0" />
        <Lab cls="left-[532px] top-[142px]" t="0,0" />
        <Lab cls="left-[532px] top-[208px]" t="0,0" />
        <Lab cls="left-[30px] top-[419px]" t="170,0" />
        <Lab cls="left-[124px] top-[407px]" t="160,0" />
        <Lab cls="left-[457px] top-[607px]" t="0,0" />
        <Lab cls="left-[50px] top-[619px]" t="10,0" />
        <Lab cls="left-[291px] top-[662px]" t="100,0" />
        <Lab cls="left-[166px] top-[699px]" t="0,0" />
        <Lab cls="left-[416px] top-[699px]" t="0,0" />
        <span className="absolute left-[197px] top-[220px] text-[20px] leading-[26px] text-[#111]">170,0</span>
        <span className="absolute left-[197px] top-[593px] text-[20px] leading-[26px] text-[#111]">10,0</span>
        <span className="absolute left-[322px] top-[407px] whitespace-nowrap text-[19.5px] leading-[26px] text-[#111]">Hloubka:50,0</span>
      </div>
    </div>
  );
}

type Prop = { n: string; v?: string; r?: string; k?: "white" | "checker" | "check"; muted?: boolean };
const props: Prop[] = [
  { n: "Název", v: "67" },
  { n: "Druh vybavení", v: "Default" },
  { n: "Směr zákazníka", v: "Zleva doprava" },
  { n: "Pozice planogramu", v: "Přední" },
  { n: "Orientace polic", v: "Horizontální" },
  { n: "Kategorie", v: "Doplňky" },
  { n: "Varianta kategorie" },
  { n: "Pozice", r: "1" },
  { n: "Multi-vybavení" },
  { n: "Pozice v multi-vybavení", r: "1" },
  { n: "Typ cenovky", v: "Bez cenovek" },
  { n: "Štítky" },
  { n: "Barva", k: "white" },
  { n: "Externí Id" },
  { n: "Barva planogramu", k: "checker" },
  { n: "Barva v půdorysu z kateg...", k: "check" },
  { n: "Barva v půdorysu", k: "checker" },
  { n: "Volný prostor nad produk...", r: "0,0 cm" },
  { n: "OID", v: "440192", muted: true },
];

function PropRow({ p, i }: { p: Prop; i: number }) {
  const checker = "[background:repeating-conic-gradient(#c6c6c6_0_25%,#f5f5f5_0_50%)_0_0/14px_14px]";
  return (
    <div className={`flex h-[26.25px] shrink-0 items-center text-[20.5px] leading-[26px] ${i % 2 ? "bg-white" : "bg-[#f8f8f8]"}`}>
      <div className="h-full w-[28px] shrink-0 bg-[#ececec]" />
      <div className={`w-[286px] shrink-0 overflow-hidden whitespace-nowrap pl-[1px] text-[20.5px] font-bold ${p.muted ? "text-[#8a8a8a]" : "text-[#222]"}`}>{p.n}</div>
      <div className="h-full w-[25px] shrink-0 border-x border-[#efefef]" />
      <div className="flex h-full w-[306px] shrink-0 items-center border-r border-[#efefef] px-[4px] text-[#222]">
        {p.v && <span>{p.v}</span>}
        {p.r && <span className="ml-auto">{p.r}</span>}
        {p.k === "white" && <div className="h-[17px] w-full border border-[#7c7c7c] bg-white" />}
        {p.k === "checker" && <div className={`h-[17px] w-full border border-[#8c8c8c] ${checker}`} />}
        {p.k === "check" && (
          <div className="mx-auto flex h-[22px] w-[22px] items-center justify-center rounded-[5px] bg-[#2a7cf0]">
            <svg width="16" height="16" viewBox="0 0 16 16" fill="none"><path d="M3 8l4 5 6-10" stroke="#fff" strokeWidth="2.4" /></svg>
          </div>
        )}
      </div>
      <div className="flex h-full w-[26px] shrink-0 items-center justify-center border-r border-[#efefef]">{!p.muted && <Icon n="reset" s={21} />}</div>
      <div className="flex h-full w-[26px] shrink-0 items-center justify-center border-r border-[#efefef]"><Icon n="pick" s={21} /></div>
    </div>
  );
}

function PropsTable() {
  return (
    <div className="relative ml-[8px] mt-[10px] min-h-0 w-[751px] flex-1 overflow-hidden rounded-tl-[2px] border border-[#cfcfcf] bg-[#f5f5f5]">
      <div className="flex h-[25px] w-[722px] items-center bg-[#f0f0f0] pl-[6px] text-[20px] font-bold text-[#555]">
        <svg width="14" height="10" viewBox="0 0 14 10" fill="none" className="mr-[10px]"><path d="M1 1l6 7 6-7" stroke="#aaa" strokeWidth="1.5" /></svg>
        Základní
      </div>
      <div className="flex w-[722px] flex-col">
        {props.map((p, i) => <PropRow key={p.n} p={p} i={i} />)}
      </div>
      <div className="absolute left-[731px] top-[3px] h-[151px] w-[13px] rounded-full bg-[#c8c8c8]" />
    </div>
  );
}

function VTab({ icon, t, h, active, sep = true }: { icon: string; t: string; h: string; active?: boolean; sep?: boolean }) {
  return (
    <div className={`flex ${h} w-[34px] shrink-0 flex-col items-center gap-[7px] pt-[8px] ${active ? "border-y border-r-2 border-[#9cb4d4] border-r-[#2a60b0] bg-gradient-to-r from-[#d8e2ee] via-[#a8d0f6] to-[#50a8f4]" : sep ? "border-b border-[#c8c8c8]" : ""}`}>
      <Icon n={icon} s={27} />
      <span className={`whitespace-nowrap text-[18.4px] leading-[26px] [writing-mode:vertical-rl] ${active ? "font-bold text-[#0d1a2a]" : "text-[#1d1d1d]"}`}>{t}</span>
    </div>
  );
}

function RightColumn() {
  return (
    <div className="flex w-[794px] shrink-0">
      <div className="flex w-[760px] shrink-0 flex-col">
        <div className="flex h-[53px] shrink-0 items-center pb-[3px] pl-[3px]">
          {["zin", "zout", "zall"].map((n) => (
            <div key={n} className="flex w-[59px] justify-center"><Icon n={n} /></div>
          ))}
          <div className="ml-[10px] flex h-[34px] w-[77px] items-center border-b border-[#d0d0d0] bg-white pl-[3px] text-[21px]">76 %</div>
          <div className="ml-[10px] flex h-[33px] w-[31px] items-center justify-center rounded-[8px] bg-white shadow-[0_1px_3px_rgba(0,0,0,0.2)]"><Icon n="spin" s={26} /></div>
          <div className="ml-[11px] flex">
            {["plus", "copy", "xg", "up", "down"].map((n) => (
              <div key={n} className="flex w-[59px] justify-center"><Icon n={n} /></div>
            ))}
          </div>
        </div>
        <div className="pl-[11px]"><Diagram /></div>
        <div className="relative flex h-[20px] shrink-0 items-center gap-[9px] pl-[23px]">
          <svg width="16" height="10" viewBox="0 0 16 10"><path d="M8 0l8 10H0z" fill="#111" /></svg>
          <svg width="16" height="10" viewBox="0 0 16 10"><path d="M8 10L0 0h16z" fill="#111" /></svg>
          <div className="absolute left-[357px] top-[9px] h-[2px] w-[44px] bg-[repeating-linear-gradient(90deg,#b0b0b0_0_2px,transparent_2px_5px)]" />
        </div>
        <div className="ml-[8px] flex h-[31px] shrink-0 border-b-2 border-[#c8c8c8] pl-[12px]">
          <Tab label="Vlastnosti vybavení" active cls="w-[198px] border-t-2" />
          <Tab label="Vlastnosti police" cls="w-[161px] border-r border-[#c8c8c8]" />
        </div>
        <div className="ml-[12px] mt-[4px] flex h-[32px] w-[474px] shrink-0 items-center border-b border-[#d8d8d8] bg-white pl-[10px]"><Icon n="search" s={26} /></div>
        <PropsTable />
      </div>
      <div className="flex w-[34px] shrink-0 flex-col pt-[8px]">
        <VTab icon="house" t="Pobočka" h="h-[127px]" sep={false} />
        <VTab icon="comp" t="Komponenta" h="h-[168px]" active />
        <VTab icon="ble" t="Bloky komponent" h="h-[200px]" />
        <VTab icon="box" t="Produkty" h="h-[137px]" />
        <VTab icon="oshelf" t="Bloky planogramů" h="h-[211px]" />
        <VTab icon="image" t="Fotky" h="h-[102px]" />
        <VTab icon="wrench" t="Nástroj" h="h-[119px]" />
      </div>
    </div>
  );
}

function TopToolbar() {
  return (
    <div className="flex h-[50px] shrink-0 items-center border-b-2 border-[#d8d8d8] bg-[#ececec] pl-[8px] pt-[2px] text-[#111]">
      <div className="flex h-[36px] w-[98px] items-center gap-[6px] rounded-[8px] bg-white pl-[8px] text-[19px] shadow-[0_1px_3px_rgba(0,0,0,0.2)]"><Icon n="save" />Uložit</div>
      <div className="ml-[18px] flex h-[36px] w-[173px] items-center gap-[6px] rounded-[8px] bg-white pl-[8px] text-[19px] shadow-[0_1px_3px_rgba(0,0,0,0.2)]"><Icon n="msg" />Otevřít zprávy</div>
      <div className="ml-[15px] flex w-[59px] justify-center"><Icon n="undo" /></div>
      <div className="flex w-[59px] justify-center"><Icon n="redo" /></div>
      <div className="ml-[14px] flex w-[32px] justify-center"><Icon n="clock" /></div>
      <div className="ml-[12px] flex h-[36px] w-[36px] items-center justify-center bg-[#a9c8e8]"><Icon n="sel" /></div>
      <div className="ml-[14px]"><Icon n="selarrow" /></div>
      <div className="ml-[18px]"><Icon n="connect" /></div>
      <div className="ml-[18px]"><Icon n="cam" /></div>
      <div className="ml-[12px]"><Icon n="stack" /></div>
      <div className="ml-[12px] flex h-[33px] w-[193px] items-center border-b border-[#d0d0d0] bg-white pl-[3px] text-[23px]">09.05.2022</div>
      <div className="ml-[8px] flex h-[33px] w-[32px] items-center justify-center rounded-[8px] bg-white shadow-[0_1px_3px_rgba(0,0,0,0.2)]"><Icon n="spin" s={26} /></div>
      <div className="ml-[26px]"><Icon n="zin" /></div>
      <div className="ml-[18px]"><Icon n="zout" /></div>
      <div className="ml-[18px]"><Icon n="zfit" /></div>
      <div className="ml-[18px]"><Icon n="zall" /></div>
      <div className="ml-[17px] flex h-[33px] w-[66px] items-center border-b border-[#d0d0d0] bg-white pl-[3px] text-[21px]">67 %</div>
      <div className="ml-[11px] flex h-[33px] w-[32px] items-center justify-center rounded-[8px] bg-white shadow-[0_1px_3px_rgba(0,0,0,0.2)]"><Icon n="spin" s={26} /></div>
      <div className="ml-[26px]"><Icon n="x" /></div>
      <div className="ml-[18px]"><Icon n="check" /></div>
    </div>
  );
}

function Overlays() {
  const stroke = "#3b78b9";
  return (
    <>
      <svg className="pointer-events-none absolute left-0 top-0 z-20" width="2724" height="1650" viewBox="0 0 2724 1650" fill="none">
        <rect x="654" y="632" width="52" height="39" rx="8" stroke={stroke} strokeWidth="5" />
        <rect x="878.5" y="632" width="52" height="39" rx="8" stroke={stroke} strokeWidth="5" />
        <rect x="1098.5" y="632" width="52" height="39" rx="8" stroke={stroke} strokeWidth="5" />
        <rect x="1964.5" y="1202.5" width="696" height="32" rx="8" stroke={stroke} strokeWidth="5" />
        <path d="M302 875H573L672 677L704 875H751Q796 875 796 920V1033Q796 1078 751 1078H302Q257 1078 257 1033V920Q257 875 302 875Z" fill="#eff4fa" stroke={stroke} strokeWidth="6" />
        <path d="M860 1340H1463Q1503 1340 1503 1382L1962 1228L1503 1440V1543Q1503 1583 1463 1583H860Q820 1583 820 1543V1380Q820 1340 860 1340Z" fill="#eff4fa" stroke={stroke} strokeWidth="6" strokeLinejoin="round" />
      </svg>
      <div className="absolute left-[265px] top-[905px] z-30 w-[520px] text-center font-['Liberation_Sans',Arial,sans-serif] text-[48px] leading-[66px] text-[#3b78b9]">
        Šipky znázorňující<br />směr.
      </div>
      <div className="absolute left-[828px] top-[1391px] z-30 w-[660px] text-center font-['Liberation_Sans',Arial,sans-serif] text-[48px] leading-[66px] text-[#3b78b9]">
        Směr zákazníka je<br />nastaven zleva doprava.
      </div>
    </>
  );
}

export default function App() {
  return (
    <div className="relative h-[1650px] w-[2724px] overflow-hidden bg-white font-['Noto_Sans',sans-serif]">
      <div className="absolute left-0 top-0 h-[14px] w-[14px] bg-[#4a2a6a]" />
      <div className="relative mt-[3px] flex h-[1647px] flex-col overflow-hidden rounded-[14px] bg-[#ececec]">
        <div className="relative flex h-[44px] shrink-0 items-center justify-center bg-gradient-to-b from-[#e9e9e9] to-[#d6d6d6] text-[23px] font-semibold text-[#383838]">
          <div className="absolute left-[15px] top-[12px] flex gap-[13px]">
            <div className="h-[20px] w-[20px] rounded-full bg-[#ee6a5e]" />
            <div className="h-[20px] w-[20px] rounded-full bg-[#f5bd4f]" />
            <div className="h-[20px] w-[20px] rounded-full bg-[#61c354]" />
          </div>
          Editor pobočky - Beroun - 09.09.21 13:40
        </div>
        <TopToolbar />
        <div className="flex min-h-0 flex-1">
          <div className="flex w-[1930px] shrink-0 flex-col">
            <div className="flex h-[1106px] shrink-0">
              <Toolbox />
              <div className="flex min-w-0 flex-1 pl-[9px] pr-[3px]"><Canvas /></div>
            </div>
            <div className="relative h-[13px] shrink-0">
              <div className="absolute left-[946px] top-[6px] h-[2px] w-[44px] bg-[repeating-linear-gradient(90deg,#b0b0b0_0_2px,transparent_2px_5px)]" />
            </div>
            <BottomPanel />
            <BottomTabs />
          </div>
          <RightColumn />
        </div>
      </div>
      <Overlays />
    </div>
  );
}
